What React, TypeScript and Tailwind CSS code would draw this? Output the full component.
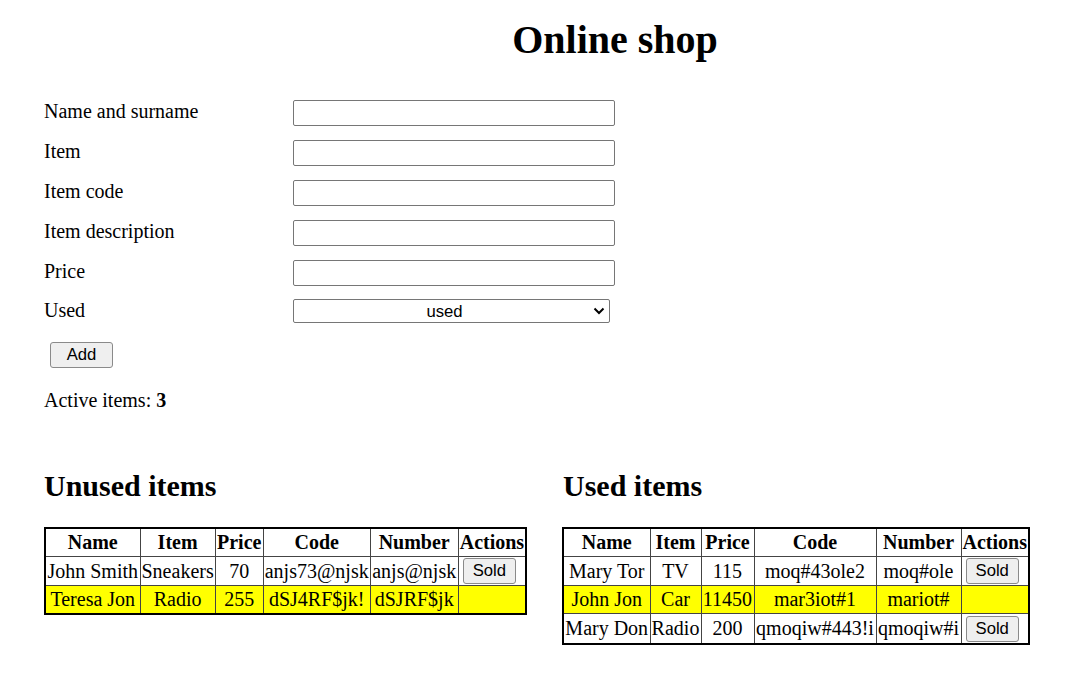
import React from 'react';

const serif = { fontFamily: '"Liberation Serif", "Times New Roman", serif' };
const sans = { fontFamily: '"Liberation Sans", Arial, sans-serif' };

interface Row {
  name: string;
  item: string;
  price: string;
  code: string;
  number: string;
  sold: boolean;
}

const unused: Row[] = [
  { name: 'John Smith', item: 'Sneakers', price: '70', code: 'anjs73@njsk', number: 'anjs@njsk', sold: false },
  { name: 'Teresa Jon', item: 'Radio', price: '255', code: 'dSJ4RF$jk!', number: 'dSJRF$jk', sold: true },
];

const used: Row[] = [
  { name: 'Mary Tor', item: 'TV', price: '115', code: 'moq#43ole2', number: 'moq#ole', sold: false },
  { name: 'John Jon', item: 'Car', price: '11450', code: 'mar3iot#1', number: 'mariot#', sold: true },
  { name: 'Mary Don', item: 'Radio', price: '200', code: 'qmoqiw#443!i', number: 'qmoqiw#i', sold: false },
];

const fields = ['Name and surname', 'Item', 'Item code', 'Item description', 'Price'];

function ItemsTable({ rows, widths }: { rows: Row[]; widths: number[] }) {
  const heads = ['Name', 'Item', 'Price', 'Code', 'Number', 'Actions'];
  return (
    <table className="border-collapse border-2 border-black text-[20px] leading-[23px]">
      <thead>
        <tr>
          {heads.map((h, i) => (
            <th
              key={h}
              style={{ width: widths[i] }}
              className="border border-[#444] px-[1px] py-[2px] font-bold text-center"
            >
              {h}
            </th>
          ))}
        </tr>
      </thead>
      <tbody>
        {rows.map((r) => (
          <tr key={r.name} className={r.sold ? 'bg-[#ffff00]' : ''}>
            <td className="border border-[#444] px-[1px] py-[2px] text-center whitespace-nowrap">{r.name}</td>
            <td className="border border-[#444] px-[1px] py-[2px] text-center whitespace-nowrap">{r.item}</td>
            <td className="border border-[#444] px-[1px] py-[2px] text-center whitespace-nowrap">{r.price}</td>
            <td className="border border-[#444] px-[1px] py-[2px] text-center whitespace-nowrap">{r.code}</td>
            <td className="border border-[#444] px-[1px] py-[2px] text-center whitespace-nowrap">{r.number}</td>
            <td className="border border-[#444] px-[1px] py-[1px] text-left pl-[4px]">
              {!r.sold && (
                <button
                  style={sans}
                  className="h-[26px] px-[9px] text-[16.7px] leading-[20px] bg-[#efefef] border border-[#8a8a8a] rounded-[3px] text-black align-middle"
                >
                  Sold
                </button>
              )}
            </td>
          </tr>
        ))}
      </tbody>
    </table>
  );
}

export default function App() {
  return (
    <div style={serif} className="w-[1072px] min-h-[676px] bg-white text-black">
      {/* Title */}
      <div className="pl-[158px] pt-[17px] text-center">
        <h1 className="text-[40px] leading-[46px] font-bold">Online shop</h1>
      </div>

      {/* Form */}
      <div className="pl-[44px] pt-[37px] text-[20px] leading-[23px]">
        <div className="flex flex-col gap-[14px]">
          {fields.map((f) => (
            <div key={f} className="flex items-center h-[26px]">
              <label className="w-[249px] -mt-[4px]">{f}</label>
              <input
                type="text"
                className="w-[322px] h-[26px] border border-[#767676] rounded-[2px] bg-white outline-none"
              />
            </div>
          ))}
        </div>
        <div className="flex items-center h-[24px] mt-[13px]">
          <label className="w-[249px] -mt-[2px]">Used</label>
          <div className="relative w-[317px] h-[24px]">
            <select
              style={{ ...sans, textAlignLast: 'center' }}
              className="appearance-none w-full h-full border border-[#767676] rounded-[2px] bg-white text-[16.7px] text-center pr-[14px] outline-none"
              defaultValue="used"
            >
              <option value="used">used</option>
              <option value="unused">unused</option>
            </select>
            <svg
              className="absolute right-[5px] top-[8px] pointer-events-none"
              width="12"
              height="8"
              viewBox="0 0 12 8"
            >
              <path d="M1.5 1.5 L6 6 L10.5 1.5" fill="none" stroke="#000" strokeWidth="2" />
            </svg>
          </div>
        </div>
        <button
          style={sans}
          className="block ml-[6px] mt-[19px] w-[63px] h-[26px] text-[16.7px] leading-[20px] bg-[#efefef] border border-[#8a8a8a] rounded-[3px] text-black"
        >
          Add
        </button>
        <p className="mt-[21px]">
          Active items: <b>3</b>
        </p>
      </div>

      {/* Tables */}
      <div className="flex pl-[44px] mt-[57px]">
        <div className="w-[519px]">
          <h2 className="text-[30px] leading-[34px] font-bold">Unused items</h2>
          <div className="mt-[24px]">
            <ItemsTable rows={unused} widths={[95, 75, 48, 107, 88, 67]} />
          </div>
        </div>
        <div>
          <h2 className="text-[30px] leading-[34px] font-bold">Used items</h2>
          <div className="mt-[24px] -ml-[1px]">
            <ItemsTable rows={used} widths={[87, 51, 53, 122, 85, 65]} />
          </div>
        </div>
      </div>
    </div>
  );
}
